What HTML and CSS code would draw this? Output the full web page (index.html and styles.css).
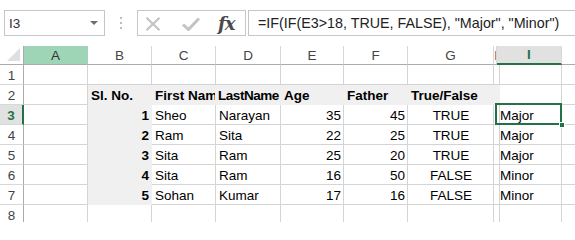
FILE: index.html
```html
<!DOCTYPE html>
<html>
<head>
<meta charset="utf-8">
<link rel="stylesheet" href="styles.css">
</head>
<body>
<div class="toolbar">
  <div class="namebox"><span class="nb-text">I3</span><span class="nb-arrow"></span></div>
  <div class="dots"><span></span><span></span><span></span></div>
  <div class="fxbox">
    <svg class="ico-x" width="16" height="14" viewBox="0 0 16 14"><path d="M1.5 0.8 L14.5 13.2 M14.5 0.8 L1.5 13.2" stroke="#c3c3c3" stroke-width="2.2" fill="none"/></svg>
    <svg class="ico-check" width="18" height="14" viewBox="0 0 18 14"><path d="M1 7.5 L6.5 12.5 L17 1.5" stroke="#c3c3c3" stroke-width="3" fill="none"/></svg>
    <span class="fx">fx</span>
  </div>
  <div class="formula">=IF(IF(E3&gt;18, TRUE, FALSE), "Major", "Minor")</div>
</div>
<div class="sheet">
  <div class="ch corner"><span class="tri"></span></div>
  <div class="ch ch-sel">A</div>
  <div class="ch">B</div>
  <div class="ch">C</div>
  <div class="ch">D</div>
  <div class="ch">E</div>
  <div class="ch">F</div>
  <div class="ch">G</div>
  <div class="ch ch-h">I</div>
  <div class="ch ch-act">I</div>
  <div class="ch ch-end"></div>

  <div class="rh">1</div>
  <div class="c"></div><div class="c"></div><div class="c"></div><div class="c"></div><div class="c"></div><div class="c"></div><div class="c"></div><div class="c"></div><div class="c"></div><div class="c"></div>

  <div class="rh">2</div>
  <div class="c"></div>
  <div class="c g b">Sl. No.</div>
  <div class="c g b clip">First Name</div>
  <div class="c g b tight">LastName</div>
  <div class="c g b">Age</div>
  <div class="c g b">Father</div>
  <div class="c g b">True/False</div>
  <div class="c g"></div>
  <div class="c"></div>
  <div class="c"></div>

  <div class="rh rh-act">3</div>
  <div class="c"></div>
  <div class="c g b r">1</div>
  <div class="c">Sheo</div>
  <div class="c">Narayan</div>
  <div class="c r">35</div>
  <div class="c r">45</div>
  <div class="c m">TRUE</div>
  <div class="c"></div>
  <div class="c sel">Major<span class="handle"></span></div>
  <div class="c"></div>

  <div class="rh">4</div>
  <div class="c"></div>
  <div class="c g b r">2</div>
  <div class="c">Ram</div>
  <div class="c">Sita</div>
  <div class="c r">22</div>
  <div class="c r">25</div>
  <div class="c m">TRUE</div>
  <div class="c"></div>
  <div class="c">Major</div>
  <div class="c"></div>

  <div class="rh">5</div>
  <div class="c"></div>
  <div class="c g b r">3</div>
  <div class="c">Sita</div>
  <div class="c">Ram</div>
  <div class="c r">25</div>
  <div class="c r">20</div>
  <div class="c m">TRUE</div>
  <div class="c"></div>
  <div class="c">Major</div>
  <div class="c"></div>

  <div class="rh">6</div>
  <div class="c"></div>
  <div class="c g b r">4</div>
  <div class="c">Sita</div>
  <div class="c">Ram</div>
  <div class="c r">16</div>
  <div class="c r">50</div>
  <div class="c m">FALSE</div>
  <div class="c"></div>
  <div class="c">Minor</div>
  <div class="c"></div>

  <div class="rh">7</div>
  <div class="c"></div>
  <div class="c g b r">5</div>
  <div class="c">Sohan</div>
  <div class="c">Kumar</div>
  <div class="c r">17</div>
  <div class="c r">16</div>
  <div class="c m">FALSE</div>
  <div class="c"></div>
  <div class="c">Minor</div>
  <div class="c"></div>

  <div class="rh">8</div>
  <div class="c"></div><div class="c"></div><div class="c"></div><div class="c"></div><div class="c"></div><div class="c"></div><div class="c"></div><div class="c"></div><div class="c"></div><div class="c"></div>
</div>
</body>
</html>
```
FILE: styles.css
```css
* { box-sizing: border-box; }
html, body { margin: 0; padding: 0; background: #fff; }
body {
  width: 575px;
  height: 222px;
  overflow: hidden;
  font-family: "Liberation Sans", Arial, sans-serif;
  color: #000;
}
.toolbar {
  display: flex;
  align-items: center;
  height: 46px;
  padding: 10px 0 10px 4px;
}
.namebox {
  width: 101px;
  height: 26px;
  border: 1px solid #c6c6c6;
  display: flex;
  align-items: center;
  justify-content: space-between;
  padding: 0 6px 0 4px;
  font-size: 13.5px;
  color: #333;
}
.nb-arrow {
  width: 0; height: 0;
  border-left: 4px solid transparent;
  border-right: 4px solid transparent;
  border-top: 4px solid #6f6f6f;
}
.dots {
  width: 32px;
  display: flex;
  flex-direction: column;
  align-items: center;
  gap: 3px;
}
.dots span { width: 2px; height: 2px; background: #bdbdbd; }
.fxbox {
  width: 109px;
  height: 26px;
  border: 1px solid #c6c6c6;
  display: flex;
  align-items: center;
  padding-left: 7px;
}
.ico-x { margin-top: 1px; }
.ico-check { margin-left: 21px; margin-top: 1px; }
.fx {
  margin-left: 18px;
  font-family: "DejaVu Serif", "Liberation Serif", serif;
  font-style: italic;
  font-weight: bold;
  font-size: 18px;
  color: #4a4a4a;
  letter-spacing: -1px;
}
.formula {
  flex: 1;
  margin-left: 2px;
  height: 26px;
  border: 1px solid #c6c6c6;
  border-right: none;
  padding-left: 9px;
  font-size: 14.3px;
  line-height: 24px;
  color: #222;
  white-space: nowrap;
  overflow: hidden;
}
.sheet {
  display: grid;
  grid-template-columns: 24px 64px 64px 64px 65px 63px 64px 86px 3px 65px 13px;
  grid-template-rows: 19px repeat(7, 20px) 20px;
}
.ch {
  border-right: 1px solid #d8d8d8;
  border-bottom: 1px solid #ababab;
  font-size: 13.5px;
  color: #444;
  display: flex;
  align-items: center;
  justify-content: center;
  overflow: hidden;
}
.corner { position: relative; border-right-color: #ababab; }
.tri {
  position: absolute;
  right: 3px; bottom: 3px;
  width: 0; height: 0;
  border-left: 13px solid transparent;
  border-bottom: 13px solid #dfdfdf;
}
.ch-sel { background: #9fd5b7; border-right-color: #9fd5b7; color: #333; }
.ch-h { justify-content: flex-start; color: #666; }
.ch-act {
  background: #e1e1e1;
  border-bottom: 2px solid #217346;
  color: #217346;
  font-weight: bold;
}
.ch-end { border-right: none; }
.rh {
  border-right: 1px solid #ababab;
  border-bottom: 1px solid #d8d8d8;
  font-size: 13.5px;
  color: #444;
  display: flex;
  align-items: center;
  justify-content: center;
  padding-top: 1px;
}
.rh-act {
  background: #e1e1e1;
  border-right: 2px solid #217346;
  color: #217346;
  font-weight: bold;
}
.c {
  border-right: 1px solid #d4d4d4;
  border-bottom: 1px solid #d4d4d4;
  font-size: 13.5px;
  line-height: 19px;
  padding: 1px 2px 0 3px;
  white-space: nowrap;
  overflow: hidden;
}
.c:nth-child(11n) { border-right: none; }
.g { background: #f0f0f0; border-color: #f0f0f0; }
.b { font-weight: bold; }
.clip { padding-right: 0; text-overflow: clip; }
.tight { letter-spacing: -0.45px; padding-left: 2px; padding-right: 0; }
.r { text-align: right; }
.m { text-align: center; }
.sel { position: relative; overflow: visible; }
.sel::after {
  content: "";
  position: absolute;
  left: -2px; top: -2px;
  right: -1px; bottom: -1px;
  border: 2px solid #217346;
}
.handle {
  position: absolute;
  right: -4px; bottom: -4px;
  width: 6px; height: 6px;
  background: #217346;
  border: 1px solid #fff;
  z-index: 2;
}
```
